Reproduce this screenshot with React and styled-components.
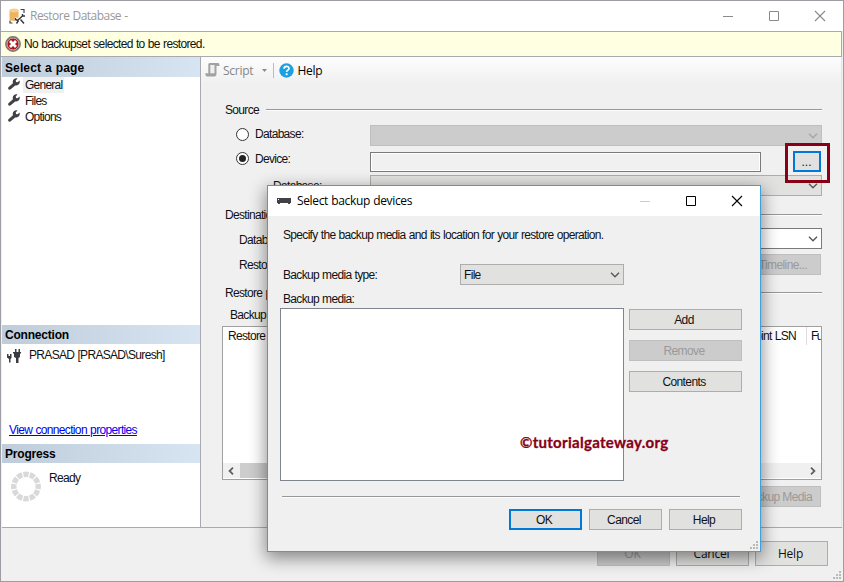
import React from 'react';
import styled, { createGlobalStyle } from 'styled-components';

const GlobalStyle = createGlobalStyle`
  * { box-sizing: border-box; }
  body {
    margin: 0;
    overflow: hidden;
    font: 12px "Liberation Sans", Arial, sans-serif;
    letter-spacing: -0.68px;
    word-spacing: 0.5px;
    color: #111;
    cursor: default;
    white-space: nowrap;
  }
  svg { display: block; flex: none; }
`;

const Window = styled.div`
  position: relative;
  display: flex;
  flex-direction: column;
  width: 844px;
  height: 582px;
  background: #f0f0f0;
  border: 1px solid #9c9ca3;
`;

const TitleBar = styled.div`
  display: flex;
  align-items: center;
  flex: none;
  height: 30px;
  padding-left: ${p => p.$modal ? '9px' : '8px'};
  background: #fff;
`;

const Title = styled.div`
  flex: 1;
  padding: 0 0 1px ${p => p.$modal ? '6px' : '4px'};
  font: 12px "Open Sans", "Noto Sans", sans-serif;
  letter-spacing: ${p => p.$modal ? '-0.35px' : '-0.52px'};
  color: ${p => p.$modal ? '#000' : '#999'};
`;

const WindowButtons = styled.div`
  display: flex;
  gap: 34px;
  padding: 0 17px 1px 0;
`;

const Notice = styled.div`
  display: flex;
  align-items: center;
  gap: 3px;
  flex: none;
  height: 26px;
  margin: 0 1px 0 0;
  padding-left: 4px;
  background: #ffffe1;
  border: 1px solid #a9a9b0;
  border-left: 0;
  letter-spacing: -0.65px;
`;

const Body = styled.div`
  display: flex;
  flex: none;
  height: 471px;
  margin: 0 1px;
  border-bottom: 1px solid #a9a9b0;
`;

const Sidebar = styled.div`
  display: flex;
  flex-direction: column;
  flex: none;
  width: 199px;
  background: #fff;
  border-right: 1px solid #a9a9b0;
`;

const SideSection = styled.div`
  height: ${p => p.$height};
`;

const SideHeader = styled.div`
  display: flex;
  align-items: center;
  height: ${p => p.$height || '19px'};
  padding: ${p => p.$top || 0} 0 0 3px;
  background: linear-gradient(90deg, #bfccda, #d7e4f2);
  font-weight: bold;
  letter-spacing: ${p => p.$spacing || '-0.2px'};
  color: #000;
`;

const PageItem = styled.div`
  display: flex;
  align-items: center;
  height: 16px;
  padding-left: 6px;
  gap: 3px;

  svg { margin-bottom: 2px; }
`;

const PageName = styled.span`
  height: 16px;
  padding: 1px 2px 0;
  background: ${p => p.$active ? '#f0f0f0' : 'none'};
  letter-spacing: -0.76px;
`;

const Server = styled.div`
  display: flex;
  align-items: center;
  gap: 8px;
  height: 21px;
  padding-left: 5px;

  svg { margin-top: 2px; }
`;

const ConnectionLink = styled.a`
  display: block;
  margin: 58px 0 0 7px;
  letter-spacing: -0.65px;
  color: #0000ee;
  text-decoration: underline;
`;

const Progress = styled.div`
  display: flex;
  gap: 7px;
  padding: 8px 0 0 9px;
`;

const Main = styled.div`
  display: flex;
  flex-direction: column;
  flex: 1;
  min-width: 0;
  border-right: 1px solid #e4e4e8;
`;

const Toolbar = styled.div`
  display: flex;
  align-items: center;
  flex: none;
  height: 26px;
  padding-left: 4px;
  background: linear-gradient(#fdfdfd, #f0f0f0);
  font: 12px "Open Sans", "Noto Sans", sans-serif;
  letter-spacing: -0.25px;
  color: #000;
`;

const ScriptLabel = styled.span`
  margin: 0 9px 0 3px;
  color: #868686;
`;

const ToolbarDivider = styled.div`
  width: 1px;
  height: 15px;
  margin: 0 5px 0 6px;
  background: #bcbcbc;
`;

const HelpLabel = styled.span`
  margin-left: 3px;
`;

const Content = styled.div`
  display: flex;
  flex-direction: column;
  padding: 17px 19px 0 24px;
`;

const Heading = styled.div`
  display: flex;
  align-items: center;
  gap: 7px;
  height: 20px;
  margin-top: ${p => p.$top || 0};

  &::after {
    content: '';
    flex: 1;
    height: 1px;
    background: #98989c;
    border-bottom: 1px solid #fdfdfd;
  }
`;

const Row = styled.div`
  display: flex;
  align-items: center;
  height: ${p => p.$height || '21px'};
  margin-top: ${p => p.$top || 0};
  padding-left: ${p => p.$indent || 0};
`;

const Label = styled.div`
  display: flex;
  align-items: center;
  gap: 6px;
  flex: none;
  width: ${p => p.$width || 'auto'};
  padding-top: ${p => p.$drop || 0};
  padding-bottom: ${p => p.$lift || 0};
`;

const Radio = styled.span`
  display: flex;
  align-items: center;
  justify-content: center;
  width: 13px;
  height: 13px;
  border: 1px solid #333;
  border-radius: 50%;
  background: #fff;

  &::after {
    content: '';
    width: 7px;
    height: 7px;
    border-radius: 50%;
    background: ${p => p.$checked ? '#222' : 'none'};
  }
`;

const comboColors = {
  disabled: ['#ccc', '#bfbfbf', '#a5a5a5'],
  normal: ['#e1e1df', '#adadad', '#555'],
  editable: ['#fff', '#7a7a7a', '#555'],
};

const ComboBox = styled.div`
  display: flex;
  align-items: center;
  justify-content: space-between;
  width: ${p => p.$width || 'auto'};
  flex: ${p => p.$width ? 'none' : 1};
  height: 21px;
  padding: 0 3px;
  background: ${p => comboColors[p.$kind][0]};
  border: 1px solid ${p => comboColors[p.$kind][1]};
  color: #111;

  svg { color: ${p => comboColors[p.$kind][2]}; }
`;

const TextBox = styled.div`
  width: 391px;
  height: 20px;
  background: #f0f0f0;
  border: 1px solid #7a7a7a;
  box-shadow: inset 0 0 0 1px #fff;
`;

const Button = styled.button`
  flex: none;
  width: ${p => p.$width || '73px'};
  height: ${p => p.$tall ? '25px' : '21px'};
  padding: 0 ${p => p.$tall ? '2px' : '3px'} 0 0;
  background: ${p => p.disabled ? '#ccc' : '#e1e1df'};
  border: ${p => p.$focus ? '2px solid #0078d7' : p.disabled ? '1px solid #bfbfbf' : '1px solid #adadad'};
  color: ${p => p.disabled ? '#9a9a9a' : '#111'};
  font: ${p => p.$tall ? '12px "Open Sans", sans-serif' : '12px "Liberation Sans", Arial, sans-serif'};
  letter-spacing: ${p => p.$tall ? '-0.2px' : '-0.6px'};
`;

const BrowseButton = styled(Button)`
  margin-left: auto;
  margin-right: 1px;
  padding: 0 1px 0 0;
  letter-spacing: 0;
`;

const RightButton = styled(Button)`
  margin-left: auto;
  margin-right: 1px;
  padding-right: ${p => p.$pad};
  text-align: right;
`;

const Grid = styled.div`
  display: flex;
  flex-direction: column;
  justify-content: space-between;
  height: 154px;
  margin: 0 0 1px -3px;
  background: #fff;
  border: 1px solid #a0a0a0;
`;

const GridHeader = styled.div`
  display: flex;
  justify-content: space-between;
  height: 18px;
  padding-left: 5px;
  line-height: 18px;
  overflow: hidden;
`;

const LastColumns = styled.div`
  display: flex;
  justify-content: flex-end;
`;

const LastColumn = styled.div`
  width: 15px;
  margin-left: 10px;
  padding-left: 4px;
  border-left: 1px solid #ddd;
  letter-spacing: -1.5px;
`;

const ScrollBar = styled.div`
  display: flex;
  align-items: center;
  justify-content: space-between;
  height: 15px;
  margin-bottom: 1px;
  padding: 0 5px;
  background: #f0f0f0;
`;

const Thumb = styled.div`
  width: 420px;
  height: 15px;
  margin: 0 auto 0 6px;
  background: #cdcdcd;
`;

const Footer = styled.div`
  display: flex;
  justify-content: flex-end;
  gap: 6px;
  padding: 13px 15px 0 0;
`;

const Grip = styled.div`
  position: absolute;
  right: 2px;
  bottom: 2px;
`;

const Highlight = styled.div`
  position: absolute;
  left: 784px;
  top: 142px;
  width: 45px;
  height: 40px;
  border: 3px solid #880015;
`;

const Dialog = styled.div`
  position: absolute;
  left: 266px;
  top: 184px;
  display: flex;
  flex-direction: column;
  width: 494px;
  height: 367px;
  background: #f0f0f0;
  border: 1px solid #3f9fd9;
  box-shadow: 0 5px 16px 1px rgba(0, 0, 0, 0.45);
`;

const DialogBody = styled.div`
  display: flex;
  flex-direction: column;
  padding: 8px 18px 0 12px;
`;

const MediaArea = styled.div`
  display: flex;
  gap: 5px;
`;

const MediaList = styled.div`
  width: 344px;
  height: 173px;
  background: #fff;
  border: 1px solid #7f858f;
`;

const MediaActions = styled.div`
  display: flex;
  flex-direction: column;
  gap: 10px;
  padding-top: 1px;
`;

const Rule = styled.div`
  height: 2px;
  margin: 15px 2px 0;
  background: #98989c;
  border-bottom: 1px solid #fdfdfd;
`;

const DialogFooter = styled.div`
  display: flex;
  justify-content: flex-end;
  gap: 7px;
  margin-top: 11px;
`;

const Watermark = styled.div`
  position: absolute;
  left: 252px;
  top: 247px;
  font: bold 15px Lato, sans-serif;
  letter-spacing: 0.3px;
  color: #880015;
  -webkit-text-stroke: 0.3px #880015;
`;

const Chevron = () => (
  <svg width="10" height="6" viewBox="0 0 10 6" fill="none" stroke="currentColor" strokeWidth="1.3">
    <path d="M1 .8l4 4 4-4" />
  </svg>
);

const ScrollArrow = ({ right }) => (
  <svg width="6" height="8" viewBox="0 0 6 8" fill="none" stroke="#606060" strokeWidth="1.8">
    <path d={right ? 'M1 .7L4.4 4 1 7.3' : 'M5 .7L1.6 4 5 7.3'} />
  </svg>
);

const ControlIcons = ({ color, minColor }) => (
  <WindowButtons>
    <svg width="12" height="12" viewBox="0 0 12 12"><path d="M1 6.5h10" stroke={minColor || color} /></svg>
    <svg width="12" height="12" viewBox="0 0 12 12"><path d="M1.5 1.5h9v9h-9z" fill="none" stroke={color} /></svg>
    <svg width="12" height="12" viewBox="0 0 12 12"><path d="M1 1l10 10M11 1L1 11" stroke={color} strokeWidth="1.1" /></svg>
  </WindowButtons>
);

const DatabaseIcon = () => (
  <svg width="17" height="17" viewBox="0 0 17 17">
    <path d="M.5 2.5V11c0 1.2 2 2 4.500 2s4.500-.8 4.500-2V2.500z" fill="#efb35e" />
    <ellipse cx="5" cy="2.5" rx="4.5" ry="1.9" fill="#f6cf96" />
    <path d="M11.500 1.500h3.500V5M1 12.500V15h2.500" fill="none" stroke="#444" strokeWidth="1.2" />
    <path d="M6 10l2.500 2.500L14 7M7 15l8-7M11 10l4 5" fill="none" stroke="#fff" strokeWidth="3" />
    <path d="M6.500 10v1.500l2 1 5-4.500V6M7.500 15.500l2-3M13.500 8h2.500M11.500 11.500l3.500 4" fill="none" stroke="#333" strokeWidth="1.4" />
  </svg>
);

const ErrorIcon = () => (
  <svg width="16" height="16" viewBox="0 0 16 16">
    <circle cx="8" cy="8" r="7.2" fill="#b01818" stroke="#777" strokeWidth="1.4" />
    <circle cx="8" cy="8" r="6" fill="none" stroke="#ccc" strokeWidth=".9" />
    <path d="M5 5l6 6M11 5l-6 6" stroke="#fff" strokeWidth="2.8" />
  </svg>
);

const WrenchIcon = () => (
  <svg width="12" height="12" viewBox="0 0 12 12">
    <path d="M1.7 10.2L6.5 6" stroke="#414146" strokeWidth="3" strokeLinecap="round" />
    <path d="M9.5.4L7.7 2.5l.4 1.5 1.5.3 2-1.9c.7 2.2-.4 4.8-3.3 5C6.2 7.6 4.5 6 4.7 3.7 4.9 1 7.4-.4 9.5.4z" fill="#414146" />
  </svg>
);

const PlugIcon = () => (
  <svg width="14" height="14" viewBox="0 0 14 14" fill="#3c3c40">
    <path d="M0 5h1.5v2H3V5h1.5v4l-1 1v3.500H2V10L0 8.500z" />
    <path d="M8 0h1.500v3H8zM11.500 0H13v3h-1.500zM6 3h8v1.500h-1V8l-1.500 1v5H9V9L7 8V4.500H6z" />
  </svg>
);

const ScriptIcon = () => (
  <svg width="15" height="14" viewBox="0 0 15 14">
    <path d="M4.500 0H13c1.200 0 1.500 1 1.500 3h-3v7.500c0 2-.8 3-2.200 3H2C.8 13.500.3 12 .3 10.300h3V2.500C3.300 1 3.500 0 4.500 0z" fill="#a2a2a2" />
    <path d="M5.300 2h4.200v8.300H5.300z" fill="#efefef" />
  </svg>
);

const HelpIcon = () => (
  <svg width="15" height="15" viewBox="0 0 15 15">
    <circle cx="7.5" cy="7.5" r="7.2" fill="#1ba1e2" />
    <path d="M5.1 5.8c0-3.300 4.900-3 4.900-.4 0 1.800-2.400 1.700-2.400 3.600" fill="none" stroke="#fff" strokeWidth="1.7" />
    <path d="M6.700 10.300h1.900v1.900H6.700z" fill="#fff" />
  </svg>
);

const DeviceIcon = () => (
  <svg width="14" height="6" viewBox="0 0 14 6">
    <path d="M0 0h14v5h-1v1h-2V5H3v1H1V5H0z" fill="#414146" />
    <path d="M1 1h1v1H1z" fill="#fff" />
  </svg>
);

const Spinner = () => (
  <svg width="31" height="31" viewBox="0 0 31 31">
    <circle cx="15" cy="15.5" r="12.2" fill="none" stroke="#d9d9d9" strokeWidth="5.4" pathLength="120" strokeDasharray="8.2 1.8" strokeDashoffset="4.1" />
  </svg>
);

const GripDots = () => (
  <svg width="8" height="8" viewBox="0 0 8 8" fill="#b9b9b9">
    {[[6, 0], [3, 3], [6, 3], [0, 6], [3, 6], [6, 6]].map(([x, y]) => (
      <rect key={`${x}-${y}`} x={x} y={y} width="2" height="2" />
    ))}
  </svg>
);

const pages = ['General', 'Files', 'Options'];

const SelectDevices = () => (
  <Dialog>
    <TitleBar $modal>
      <DeviceIcon />
      <Title $modal>Select backup devices</Title>
      <ControlIcons color="#000" minColor="#ccc" />
    </TitleBar>
    <DialogBody>
      <Row $indent="3px">Specify the backup media and its location for your restore operation.</Row>
      <Row $indent="3px" $top="19px">
        <Label $width="177px">Backup media type:</Label>
        <ComboBox $kind="normal" $width="164px">File<Chevron /></ComboBox>
      </Row>
      <Row $indent="3px" $top="5px" $height="18px">Backup media:</Row>
      <MediaArea>
        <MediaList />
        <MediaActions>
          <Button $width="113px">Add</Button>
          <Button $width="113px" disabled>Remove</Button>
          <Button $width="113px">Contents</Button>
        </MediaActions>
      </MediaArea>
      <Rule />
      <DialogFooter>
        <Button $focus>OK</Button>
        <Button>Cancel</Button>
        <Button>Help</Button>
      </DialogFooter>
    </DialogBody>
    <Watermark>©tutorialgateway.org</Watermark>
    <Grip><GripDots /></Grip>
  </Dialog>
);

const App = () => {
  return (
    <Window>
      <GlobalStyle />
      <TitleBar>
        <DatabaseIcon />
        <Title>Restore Database -</Title>
        <ControlIcons color="#8a8a8a" />
      </TitleBar>
      <Notice>
        <ErrorIcon />
        No backupset selected to be restored.
      </Notice>
      <Body>
        <Sidebar>
          <SideSection $height="268px">
            <SideHeader $height="20px" $top="1px" $spacing="0.12px">Select a page</SideHeader>
            {pages.map((page, i) => (
              <PageItem key={page}>
                <WrenchIcon />
                <PageName $active={i === 0}>{page}</PageName>
              </PageItem>
            ))}
          </SideSection>
          <SideSection $height="119px">
            <SideHeader>Connection</SideHeader>
            <Server>
              <PlugIcon />
              PRASAD [PRASAD\Suresh]
            </Server>
            <ConnectionLink>View connection properties</ConnectionLink>
          </SideSection>
          <SideSection>
            <SideHeader>Progress</SideHeader>
            <Progress>
              <Spinner />
              Ready
            </Progress>
          </SideSection>
        </Sidebar>
        <Main>
          <Toolbar>
            <ScriptIcon />
            <ScriptLabel>Script</ScriptLabel>
            <svg width="5" height="3" viewBox="0 0 5 3"><path d="M0 0h5L2.5 3z" fill="#8a8a8a" /></svg>
            <ToolbarDivider />
            <HelpIcon />
            <HelpLabel>Help</HelpLabel>
          </Toolbar>
          <Content>
            <Heading>Source</Heading>
            <Row $indent="11px" $top="5px">
              <Label $width="134px" $lift="3px"><Radio />Database:</Label>
              <ComboBox $kind="disabled"><span /><Chevron /></ComboBox>
            </Row>
            <Row $indent="11px" $top="5px">
              <Label $width="134px" $lift="6px"><Radio $checked />Device:</Label>
              <TextBox />
              <BrowseButton $width="28px" $focus>...</BrowseButton>
            </Row>
            <Row $indent="48px" $top="3px">
              <Label $width="97px">Database:</Label>
              <ComboBox $kind="normal"><span /><Chevron /></ComboBox>
            </Row>
            <Heading $top="9px">Destination</Heading>
            <Row $indent="14px" $top="3px">
              <Label $width="131px" $drop="2px">Database:</Label>
              <ComboBox $kind="editable"><span /><Chevron /></ComboBox>
            </Row>
            <Row $indent="14px" $top="5px">
              <Label>Restore to:</Label>
              <RightButton $width="95px" $pad="13px" disabled>Timeline...</RightButton>
            </Row>
            <Heading $top="8px">Restore plan</Heading>
            <Row $indent="5px" $top="2px">
              <Label $lift="1px">Backup sets to restore:</Label>
            </Row>
            <Grid>
              <GridHeader>
                <span>Restore</span>
                <LastColumns>
                  Checkpoint LSN
                  <LastColumn>Fu</LastColumn>
                </LastColumns>
              </GridHeader>
              <ScrollBar>
                <ScrollArrow />
                <Thumb />
                <ScrollArrow right />
              </ScrollBar>
            </Grid>
            <Row $top="5px">
              <RightButton $width="140px" $pad="8px" disabled>Verify Backup Media</RightButton>
            </Row>
          </Content>
        </Main>
      </Body>
      <Footer>
        <Button $tall disabled>OK</Button>
        <Button $tall>Cancel</Button>
        <Button $tall>Help</Button>
      </Footer>
      <Highlight />
      <Grip><GripDots /></Grip>
      <SelectDevices />
    </Window>
  );
};

export default App;
